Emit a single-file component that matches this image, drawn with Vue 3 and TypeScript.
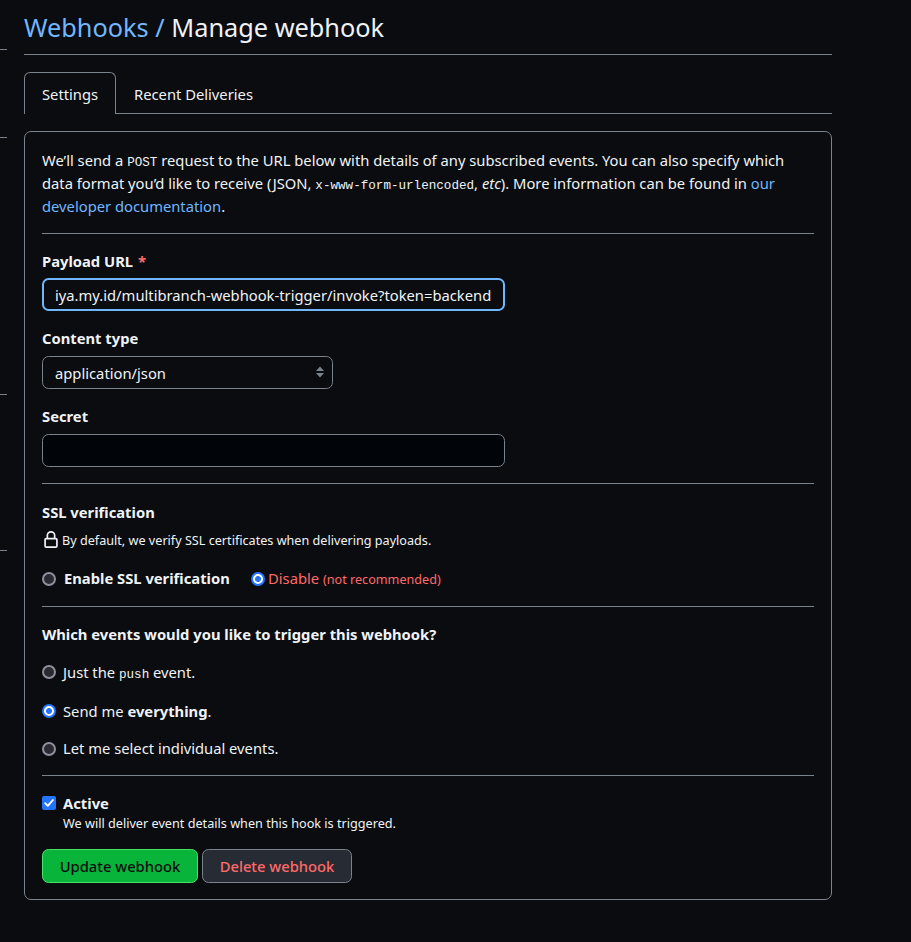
<script setup lang="ts">
import { ref } from 'vue'

const payloadUrl = ref('iya.my.id/multibranch-webhook-trigger/invoke?token=backend')
const contentType = ref('application/json')
const secret = ref('')
const ssl = ref('disable')
const events = ref('everything')
const active = ref(true)
</script>

<template>
  <div class="page">
    <aside class="rail">
      <div class="seg s1"></div>
      <div class="seg s2"></div>
      <div class="seg s3"></div>
      <div class="seg s4"></div>
    </aside>
    <main class="main">
      <h2 class="title"><a>Webhooks /</a> Manage webhook</h2>
      <nav class="tabs">
        <a class="tab selected">Settings</a>
        <a class="tab">Recent Deliveries</a>
      </nav>
      <form class="panel" @submit.prevent>
        <p class="intro">
          We’ll send a <code>POST</code> request to the URL below with details of any subscribed events. You can also specify which
          data format you’d like to receive (JSON, <code>x-www-form-urlencoded</code>, <em>etc</em>). More information can be found in
          <a>our developer documentation</a>.
        </p>
        <hr class="rule after-intro" />

        <label class="label" for="url">Payload URL <span class="req">*</span></label>
        <input id="url" v-model="payloadUrl" class="field focused" type="text" />

        <label class="label" for="ctype">Content type</label>
        <div class="select-wrap">
          <select id="ctype" v-model="contentType" class="field">
            <option>application/json</option>
          </select>
          <svg class="caret" width="8" height="12" viewBox="0 0 8 12">
            <path d="M4 0.500 8 5H0zM4 11.500 0 7h8z" fill="#7a828e" />
          </svg>
        </div>

        <label class="label" for="secret">Secret</label>
        <input id="secret" v-model="secret" class="field dark" type="text" />
        <hr class="rule" />

        <div class="label heading">SSL verification</div>
        <div class="lock-row">
          <svg class="lock" width="18" height="18" viewBox="0 0 16 16" fill="#f0f3f6">
            <path d="M4 4a4 4 0 0 1 8 0v2h.25c.966 0 1.75.784 1.75 1.75v5.5A1.75 1.75 0 0 1 12.25 15h-8.5A1.75 1.75 0 0 1 2 13.250v-5.500C2 6.784 2.784 6 3.750 6H4Zm8.250 3.500h-8.500a.25.25 0 0 0-.25.25v5.500c0 .138.112.25.25.25h8.500a.25.25 0 0 0 .25-.25v-5.500a.25.25 0 0 0-.25-.25ZM10.500 6V4a2.500 2.500 0 1 0-5 0v2Z" />
          </svg>
          <span>By default, we verify SSL certificates when delivering payloads.</span>
        </div>
        <div class="ssl-row">
          <label class="choice enable"><input v-model="ssl" class="radio" type="radio" value="enable" /><b>Enable SSL verification</b></label>
          <label class="choice disable"><input v-model="ssl" class="radio" type="radio" value="disable" /><span>Disable <small>(not recommended)</small></span></label>
        </div>
        <hr class="rule after-ssl" />

        <div class="label heading">Which events would you like to trigger this webhook?</div>
        <div class="events">
          <label class="choice raised"><input v-model="events" class="radio" type="radio" value="push" /><span>Just the <code>push</code> event.</span></label>
          <label class="choice raised"><input v-model="events" class="radio" type="radio" value="everything" /><span>Send me <b>everything</b>.</span></label>
          <label class="choice last"><input v-model="events" class="radio" type="radio" value="select" /><span>Let me select individual events.</span></label>
        </div>
        <hr class="rule" />

        <label class="choice active-row">
          <input v-model="active" class="check-input" type="checkbox" />
          <svg class="check" width="14" height="14" viewBox="0 0 14 14">
            <rect width="14" height="14" rx="2" fill="#2374ff" />
            <path v-if="active" d="M3.300 7.300 5.800 9.900 10.900 4" fill="none" stroke="#fff" stroke-width="1.900" stroke-linecap="round" stroke-linejoin="round" />
          </svg>
          <b>Active</b>
        </label>
        <div class="note">We will deliver event details when this hook is triggered.</div>
        <div class="actions">
          <button class="btn primary">Update webhook</button>
          <button class="btn danger">Delete webhook</button>
        </div>
      </form>
    </main>
  </div>
</template>

<style>
body {
  background: #0a0c10;
}
</style>

<style scoped>
* {
  box-sizing: border-box;
}
.page {
  display: flex;
  height: 942px;
  overflow: hidden;
  background: #0a0c10;
  color: #f0f3f6;
  font: 14.76px/23px "Noto Sans", sans-serif;
}
.rail {
  width: 7px;
  margin-right: 17px;
}
.seg {
  border-bottom: 1px solid #7a828e;
}
.s1 { height: 50px; }
.s2 { height: 88px; }
.s3 { height: 257px; }
.s4 { height: 156px; }
.main {
  width: 808px;
}
a {
  color: #71b7ff;
}
.title {
  height: 55px;
  margin: 0 0 17px;
  padding-top: 7px;
  border-bottom: 1px solid #7a828e;
  font-size: 25.3px;
  font-weight: 400;
  line-height: 40px;
}
.tabs {
  display: flex;
  height: 42px;
  box-shadow: inset 0 -1px #7a828e;
}
.tab {
  padding: 10px 17px 0;
  border: 1px solid transparent;
  border-bottom: 0;
  color: #f0f3f6;
}
.selected {
  width: 92px;
  border-color: #7a828e;
  border-radius: 6px 6px 0 0;
  background: #0a0c10;
}
.panel {
  height: 769px;
  margin: 17px 0 0;
  padding: 17px;
  border: 1px solid #7a828e;
  border-radius: 7px;
}
.intro {
  height: 69px;
  margin: 0;
}
code {
  font-family: "Liberation Mono", monospace;
  font-size: 12.6px;
  line-height: 1;
}
.rule {
  height: 1px;
  margin: 16px 0 17px;
  border: 0;
  background: #7a828e;
}
.after-intro {
  margin: 15px 0 16px;
}
.after-ssl {
  margin-bottom: 16px;
}
.label {
  display: block;
  height: 23px;
  margin-bottom: 5px;
  font-weight: 700;
}
.req {
  margin-left: 1px;
  color: #ff6a69;
}
.field {
  display: block;
  width: 463px;
  height: 33px;
  margin: 0 0 16px;
  padding: 0 12px;
  border: 1px solid #7a828e;
  border-radius: 6.6px;
  outline: 0;
  appearance: none;
  background: #0a0c10;
  color: #f0f3f6;
  font: inherit;
}
.focused {
  padding: 0 11px;
  border: 2px solid #71b7ff;
}
.dark {
  background: #010409;
}
.select-wrap {
  display: grid;
  width: 291px;
  margin-bottom: 16px;
}
.select-wrap > * {
  grid-area: 1 / 1;
}
.select-wrap .field {
  width: 291px;
  margin: 0;
  padding-top: 2px;
}
.caret {
  align-self: center;
  justify-self: end;
  margin: 0 9.5px 1px 0;
}
.select-wrap + .label,
.focused + .label {
  margin-bottom: 6px;
}
.heading {
  margin-bottom: 6px;
}
.lock-row {
  display: flex;
  height: 20px;
  font-size: 12.64px;
  line-height: 21px;
}
.lock {
  flex: none;
  margin: 1px 2.5px 0 -0.5px;
}
.ssl-row {
  display: flex;
  height: 23px;
  margin-top: 17px;
}
.choice {
  display: flex;
  height: 23px;
  gap: 7px;
  align-items: center;
}
b {
  font-weight: 700;
}
.enable {
  width: 209px;
  gap: 8px;
}
.disable {
  gap: 3px;
  color: #ff6a69;
}
small {
  font-size: 12.64px;
}
.radio {
  flex: none;
  width: 14px;
  height: 14px;
  margin: 0;
  border: 2px solid #8f8f9d;
  border-radius: 50%;
  appearance: none;
  background: #2b2a33;
}
.radio:checked {
  border-color: #2374ff;
  background: radial-gradient(circle, #2374ff 2.600px, #fff 3.300px);
}
.raised .radio {
  margin-bottom: 2px;
}
.events {
  display: flex;
  flex-direction: column;
  gap: 16px;
  height: 107px;
  padding-top: 9px;
}
.last {
  margin-top: -2px;
}
.check-input {
  display: none;
}
.check {
  margin-bottom: 1px;
}
.events + .rule {
  margin-bottom: 16px;
}
.note {
  height: 20px;
  padding-left: 21px;
  font-size: 12.66px;
  line-height: 17px;
}
.actions {
  display: flex;
  gap: 4px;
  margin-top: 14px;
}
.btn {
  width: 156px;
  height: 34px;
  padding: 0;
  border: 1px solid #4ae168;
  border-radius: 6.6px;
  background: #09b43a;
  color: #0a0c10;
  font: inherit;
  font-weight: 500;
}
.danger {
  width: 150px;
  border-color: #7a828e;
  background: #272b33;
  color: #ff6a69;
}
</style>
